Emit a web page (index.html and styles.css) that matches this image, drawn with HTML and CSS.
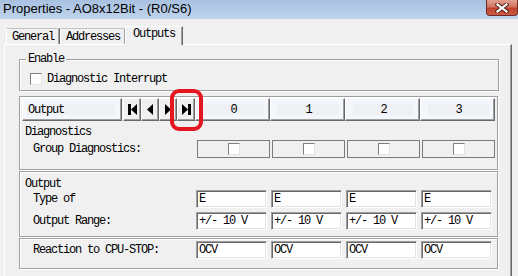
FILE: index.html
```html
<!DOCTYPE html>
<html lang="en">
<head>
    <meta charset="UTF-8">
    <title>Properties - AO8x12Bit - (R0/S6)</title>
    <link rel="stylesheet" href="styles.css">
</head>
<body>
    <div class="titlebar">
        <span class="title">Properties - AO8x12Bit - (R0/S6)</span>
        <span class="close">
            <svg width="14" height="10" viewBox="0 0 14 10">
                <path d="M2.5 1.5 L11.5 8.5 M11.5 1.5 L2.5 8.5" stroke="#5b2420" stroke-width="4.2" stroke-linecap="square"/>
                <path d="M2.5 1.5 L11.5 8.5 M11.5 1.5 L2.5 8.5" stroke="#fff" stroke-width="2.2" stroke-linecap="square"/>
            </svg>
        </span>
    </div>

    <div class="tabs">
        <div class="tab">General</div>
        <div class="tab">Addresses</div>
        <div class="tab active">Outputs</div>
    </div>

    <div class="panel">
        <fieldset class="group">
            <legend>Enable</legend>
            <div class="check-row">
                <span class="checkbox"></span>
                <span>Diagnostic Interrupt</span>
            </div>
        </fieldset>

        <div class="box box-head">
            <div class="head-row">
                <div class="hbtn hbtn-label"><span class="hbtn-inner">Output</span></div>
                <div class="nav">
                    <div class="hbtn nav-btn">
                        <svg width="9" height="11" viewBox="0 0 9 11"><rect x="0" y="0" width="3" height="11"/><polygon points="9,0 3,5.5 9,11"/></svg>
                    </div>
                    <div class="hbtn nav-btn">
                        <svg width="6" height="11" viewBox="0 0 6 11"><polygon points="6,0 0,5.5 6,11"/></svg>
                    </div>
                    <div class="hbtn nav-btn">
                        <svg width="6" height="11" viewBox="0 0 6 11"><polygon points="0,0 6,5.5 0,11"/></svg>
                    </div>
                    <div class="hbtn nav-btn">
                        <svg width="9" height="11" viewBox="0 0 9 11"><polygon points="0,0 6,5.5 0,11"/><rect x="6" y="0" width="3" height="11"/></svg>
                    </div>
                </div>
                <div class="hbtn col-head"><span class="hbtn-inner">0</span></div>
                <div class="hbtn col-head"><span class="hbtn-inner">1</span></div>
                <div class="hbtn col-head"><span class="hbtn-inner">2</span></div>
                <div class="hbtn col-head"><span class="hbtn-inner">3</span></div>
            </div>
            <div class="section-label diag-label">Diagnostics</div>
            <div class="row">
                <div class="row-label">Group Diagnostics:</div>
                <div class="cell"><div class="check-cell"><span class="checkbox"></span></div></div>
                <div class="cell"><div class="check-cell"><span class="checkbox"></span></div></div>
                <div class="cell"><div class="check-cell"><span class="checkbox"></span></div></div>
                <div class="cell"><div class="check-cell"><span class="checkbox"></span></div></div>
            </div>
        </div>

        <div class="box box-output">
            <div class="section-label">Output</div>
            <div class="row">
                <div class="row-label">Type of</div>
                <div class="cell"><div class="field">E</div></div>
                <div class="cell"><div class="field">E</div></div>
                <div class="cell"><div class="field">E</div></div>
                <div class="cell"><div class="field">E</div></div>
            </div>
            <div class="row row-next">
                <div class="row-label">Output Range:</div>
                <div class="cell"><div class="field">+/- 10 V</div></div>
                <div class="cell"><div class="field">+/- 10 V</div></div>
                <div class="cell"><div class="field">+/- 10 V</div></div>
                <div class="cell"><div class="field">+/- 10 V</div></div>
            </div>
        </div>

        <div class="box box-stop">
            <div class="row">
                <div class="row-label">Reaction to CPU-STOP:</div>
                <div class="cell"><div class="field">OCV</div></div>
                <div class="cell"><div class="field">OCV</div></div>
                <div class="cell"><div class="field">OCV</div></div>
                <div class="cell"><div class="field">OCV</div></div>
            </div>
        </div>
    </div>

    <div class="marker"></div>
</body>
</html>
```

FILE: styles.css
```css
* {
    margin: 0;
    padding: 0;
    box-sizing: border-box;
}

body {
    width: 518px;
    height: 276px;
    overflow: hidden;
    background: #f0f0f0;
    font-family: "Liberation Mono", "DejaVu Sans Mono", monospace;
    font-size: 12px;
    letter-spacing: -1.2px;
    line-height: 12px;
    color: #000;
}

/* title bar */
.titlebar {
    display: flex;
    justify-content: space-between;
    height: 19px;
    background: linear-gradient(#a8c1e1, #bfd4ec);
}

.title {
    font-family: "Liberation Sans", Arial, sans-serif;
    font-size: 13px;
    letter-spacing: 0;
    line-height: 17px;
    padding-left: 3px;
}

.close {
    width: 32px;
    height: 16px;
    border: 1px solid #6f2a25;
    border-top: 0;
    border-radius: 0 0 4px 4px;
    background: linear-gradient(#e3a092, #d27562 45%, #c1412c 55%, #cb5c45);
    display: flex;
    align-items: center;
    justify-content: center;
}

/* tabs */
.tabs {
    display: flex;
    align-items: flex-end;
    height: 25px;
    padding-left: 6px;
}

.tab {
    height: 16px;
    padding: 0 5px;
    line-height: 17px;
    border: 1px solid;
    border-bottom: 0;
    border-color: #c4c4c4 #696969 transparent #fff;
    box-shadow: inset -1px 0 0 #a0a0a0;
}

.tab.active {
    position: relative;
    height: 19px;
    padding: 0 7px;
    margin-left: -1px;
    margin-bottom: -1px;
    line-height: 15px;
    background: #f0f0f0;
    border-color: #fff #696969 transparent #fff;
}

.panel {
    margin-left: 4px;
    width: 508px;
    height: 240px;
    padding: 8px 0 0 14px;
    border: 1px solid;
    border-color: #fff #696969 #696969 #fff;
    box-shadow: inset -1px -1px 0 #a0a0a0;
}

/* Enable group */
.group {
    width: 480px;
    min-width: 0;
    padding: 6px 0 4px;
    border: 1px solid #a0a0a0;
    box-shadow: 1px 1px 0 #fff, inset 1px 1px 0 #fff;
}

.group legend {
    margin-left: 6px;
    padding: 0 2px;
    line-height: 13px;
    background: #f0f0f0;
}

.check-row {
    display: flex;
    align-items: center;
    gap: 5px;
    height: 14px;
    padding-left: 10px;
    line-height: 14px;
}

.checkbox {
    display: block;
    width: 12px;
    height: 12px;
    background: #fff;
    border: 1px solid;
    border-color: #808080 #e3e3e3 #e3e3e3 #808080;
}

/* data boxes */
.box {
    width: 479px;
    border: 1px solid #a0a0a0;
    box-shadow: 1px 1px 0 #fff, inset 1px 1px 0 #fff;
}

.box-head {
    margin-top: 5px;
    padding: 1px 0 11px;
}

.box-output {
    margin-top: 1px;
    padding: 5px 0 6px;
}

.box-stop {
    margin-top: 1px;
    padding: 2px 0 9px;
}

.head-row {
    display: flex;
    height: 23px;
    padding-left: 2px;
}

.hbtn {
    display: flex;
    align-items: center;
    background: #f3f6fb;
    border: 1px solid;
    border-color: #fff #696969 #696969 #fff;
    box-shadow: inset -1px -1px 0 #a0a0a0;
}

.hbtn-inner {
    display: block;
    flex: 1;
    height: 11px;
    line-height: 12px;
    background: #eef0f3;
}

.hbtn-label {
    width: 100px;
    padding: 0 6px 0 4px;
}

.hbtn-label .hbtn-inner {
    padding-left: 1px;
}

.nav {
    display: flex;
    margin-left: 1px;
}

.nav-btn {
    width: 18px;
    justify-content: center;
    background: #f0f0f0;
}

.col-head {
    width: 75px;
    padding: 0 5px 0 7px;
    text-align: center;
}

.section-label {
    height: 13px;
    padding-left: 5px;
    line-height: 14px;
}

.diag-label {
    height: 12px;
    margin: 4px 0 3px;
    line-height: 14px;
}

.row {
    display: flex;
    align-items: center;
}

.row-next {
    margin-top: 4px;
}

.row-label {
    width: 175px;
    padding-left: 13px;
    line-height: 14px;
}

.cell {
    width: 75px;
}

.check-cell {
    display: flex;
    align-items: center;
    justify-content: center;
    width: 73px;
    height: 18px;
    margin-left: 2px;
    border: 1px solid #7a7a7a;
}

.field {
    width: 71px;
    height: 18px;
    margin-left: 1px;
    padding-left: 2px;
    line-height: 17px;
    white-space: pre;
    background: #fff;
    border: 1px solid;
    border-color: #a0a0a0 #fff #fff #a0a0a0;
    box-shadow: inset 1px 1px 0 #696969, inset -1px -1px 0 #e3e3e3;
}

/* red annotation around the "last" button */
.marker {
    position: absolute;
    left: 170px;
    top: 89px;
    width: 33px;
    height: 42px;
    border: 4px solid #e4161f;
    border-radius: 9px;
}
```
